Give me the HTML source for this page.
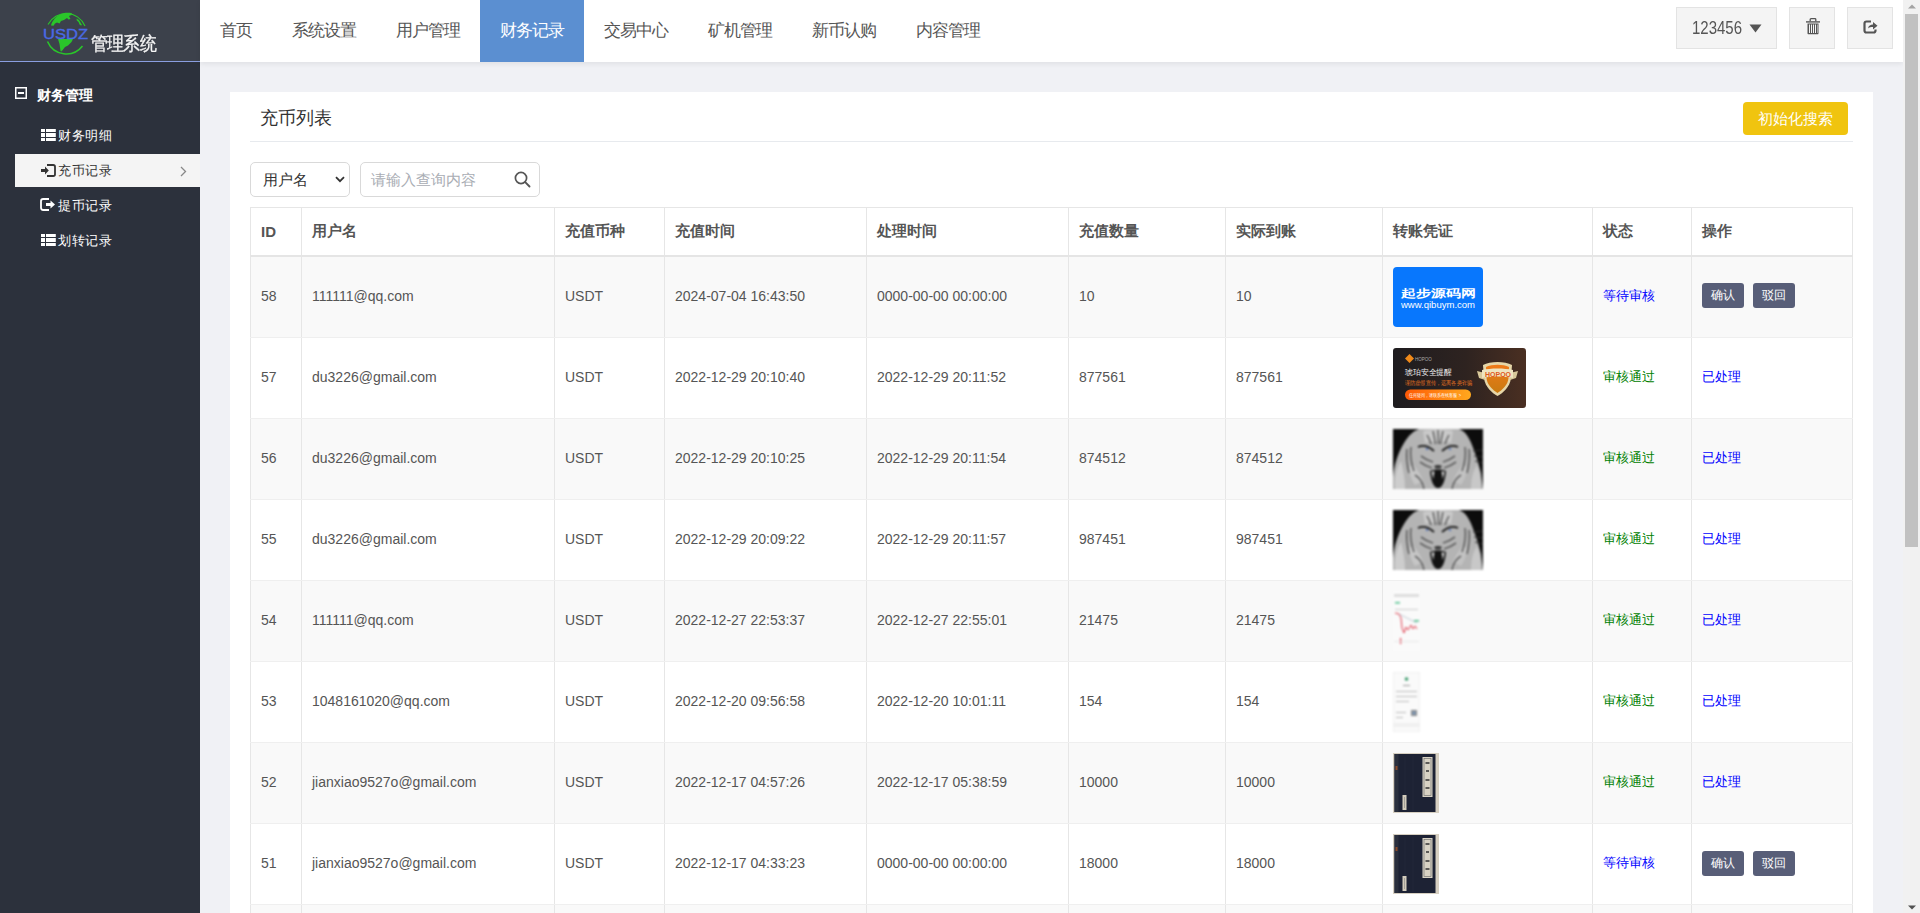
<!DOCTYPE html>
<html><head><meta charset="utf-8">
<style>
*{margin:0;padding:0;box-sizing:border-box}
html,body{width:1920px;height:913px;overflow:hidden}
body{font-family:"Liberation Sans",sans-serif;background:#f0f1f5;position:relative;color:#555}
#side{position:absolute;left:0;top:0;width:200px;height:913px;background:#2c313c}
#logo{position:absolute;left:0;top:0;width:200px;height:62px;background:#3c414b;border-bottom:1px solid #8a9ee0}
#logo .t{position:absolute;left:91px;top:31px;font-size:17px;letter-spacing:-0.8px;color:#f2f2f2;line-height:24px;white-space:nowrap;transform:scaleY(1.12);transform-origin:0 0;-webkit-text-stroke:0.25px #fff}
#top{position:absolute;left:200px;top:0;width:1703px;height:62px;background:#fff;box-shadow:0 2px 5px rgba(0,0,20,.07)}
#nav a{position:absolute;top:0;height:62px;line-height:61px;font-size:17px;letter-spacing:-1px;color:#555;text-decoration:none;white-space:nowrap}
#nav a.on{background:#5b8fd1;color:#fff}
.tb{position:absolute;top:7px;height:42px;background:#f4f4f4;border:1px solid #e3e3e3}
#scroll{position:absolute;left:1903px;top:0;width:17px;height:913px;background:#f1f1f1}
#thumb{position:absolute;left:2px;top:14px;width:13px;height:533px;background:#c1c1c1}
#card{position:absolute;left:230px;top:92px;width:1643px;height:900px;background:#fff}
.side-h{position:absolute;left:37px;top:85px;font-size:14px;font-weight:bold;color:#fff;line-height:20px;white-space:nowrap}
.mi{position:absolute;left:0;width:200px;height:34px;line-height:34px;font-size:13px;letter-spacing:0.5px;color:#fff;white-space:nowrap}
.mi span{position:absolute;left:58px;top:1px}
.mi.on{left:15px;width:185px;background:#f4f4f4;color:#333;top:154px!important;height:33px;line-height:33px}
.mi.on .ic{margin-top:0}
.mi.on span{top:0}
.mi.on span{left:43px}
.ic{position:absolute}
.uname{position:absolute;left:15px;top:0;line-height:40px;font-size:15px;color:#555;transform:scaleY(1.18);transform-origin:0 55%}
table{position:absolute;left:250px;top:207px;border-collapse:collapse;table-layout:fixed;width:1603px;font-size:14px;color:#555}
td,th{border:1px solid #e6e6e6;padding:0 10px;text-align:left;vertical-align:middle;white-space:nowrap}
th{height:48px;font-size:15px;font-weight:bold;color:#555;border-bottom:2px solid #e5e5e5}
td{border-top-color:#efefef;border-bottom-color:#efefef}
tr.r1 td{height:82px}
td{height:81px;padding-bottom:2px}
tr.odd td{background:#f9f9f9}
.pend{color:#0000ff;font-size:13px}
.ok{color:#008000;font-size:13px}
.done{color:#0000ff;font-size:13px}
.btn{display:inline-block;width:42px;height:25px;line-height:25px;text-align:center;background:#585e78;color:#fff;font-size:12px;border-radius:3px;margin-right:9px}
.ctitle{position:absolute;left:30px;top:14px;font-size:18px;color:#333;line-height:24px}
.cline{position:absolute;left:20px;top:49px;width:1603px;height:1px;background:#e7eaee}
.ybtn{position:absolute;left:1513px;top:10px;width:105px;height:33px;line-height:33px;text-align:center;background:#f0c40f;color:#fff;font-size:15px;border-radius:4px}
.sel{position:absolute;left:20px;top:70px;width:100px;height:35px;border:1px solid #d9d9d9;border-radius:5px;font-size:15px;color:#333;line-height:33px;padding-left:12px}
.chev{position:absolute;left:84px;top:13px}
.inp{position:absolute;left:130px;top:70px;width:180px;height:35px;border:1px solid #d9d9d9;border-radius:5px;font-size:15px;color:#a9adb4;line-height:33px;padding-left:10px}
.mag{position:absolute;left:153px;top:8px}
.im{display:inline-block;vertical-align:middle;position:relative;top:1px}
.blur{filter:blur(0.8px)}
</style></head><body>
<svg width="0" height="0" style="position:absolute">
<defs>
<linearGradient id="g2bg" x1="0" y1="0" x2="1" y2="0"><stop offset="0" stop-color="#1e1c1f"/><stop offset="0.55" stop-color="#2e2320"/><stop offset="1" stop-color="#4a2f22"/></linearGradient>
<linearGradient id="g2pill" x1="0" y1="0" x2="1" y2="0"><stop offset="0" stop-color="#ff5a05"/><stop offset="1" stop-color="#ffa81e"/></linearGradient>
<linearGradient id="g2sh" x1="0" y1="0" x2="0" y2="1"><stop offset="0" stop-color="#f07a1a"/><stop offset="1" stop-color="#c87a10"/></linearGradient>
<filter id="tblur" x="-5%" y="-5%" width="110%" height="110%"><feGaussianBlur stdDeviation="0.7"/></filter>
<radialGradient id="tface" cx="0.5" cy="0.55" r="0.55"><stop offset="0" stop-color="#b8b8b8"/><stop offset="0.7" stop-color="#a8a8a8"/><stop offset="1" stop-color="#8a8a8a"/></radialGradient>
<symbol id="tiger" viewBox="0 0 90 60">
  <rect width="90" height="60" fill="#0c0c0c"/>
  <path d="M0 48 C1 36 5 24 11 14 C15 7 20 2 26 0 H66 C72 2 76 8 79 16 C83 26 86 36 88 44 L90 60 H0Z" fill="#b4b4b4"/>
  <path d="M2 60 C1 50 3 40 8 32 C10 40 12 50 12 60Z" fill="#cdcdcd"/>
  <path d="M78 60 C78 50 80 42 84 36 C87 44 88 52 88 60Z" fill="#c8c8c8"/>
  <path d="M30 2 C36 0 54 0 60 2 L58 14 C52 12 38 12 32 14Z" fill="#c9c9c9"/>
  <path d="M20 36 C24 40 28 46 30 52 L22 56 C18 50 16 44 16 38Z" fill="#c6c6c6"/>
  <path d="M70 36 C66 40 62 46 60 52 L68 56 C72 50 74 44 74 38Z" fill="#c2c2c2"/>
  <g fill="none" stroke="#2e2e2e" stroke-width="1.1" opacity="0.9">
    <path d="M45 1 L45.5 15"/><path d="M40 2 C41 7 42 11 42.5 15"/><path d="M50 2 C49 7 48 11 47.5 15"/>
    <path d="M34 6 C36 9 37 12 38 15"/><path d="M56 6 C54 9 53 12 52 15"/>
    <path d="M14 20 C13 28 14 36 16 44"/><path d="M18 18 C17 26 18 34 21 42"/><path d="M76 20 C77 28 76 36 74 44"/><path d="M72 18 C73 26 72 34 69 42"/>
    <path d="M28 27 C32 30 36 32 40 33"/><path d="M62 27 C58 30 54 32 50 33"/>
    <path d="M27 33 C31 36 35 38 39 39"/><path d="M63 33 C59 36 55 38 51 39"/>
    <path d="M22 46 C27 49 30 54 31 60"/><path d="M68 46 C63 49 60 54 59 60"/>
    <path d="M80 22 L90 21"/><path d="M81 27 L90 28"/><path d="M82 32 L90 34"/>
  </g>
  <path d="M25 18 C30 15.5 36 17.5 41 22 M49 22 C54 17.5 60 15.5 65 18" stroke="#151515" stroke-width="1.8" fill="none"/>
  <path d="M37 42 C38 53 41 59 45 59 C49 59 52 53 53 42 C49 40 41 40 37 42Z" fill="#121212"/>
  <path d="M41 37 C43 35.5 47 35.5 49 37 L47.5 39.5 L42.5 39.5Z" fill="#3a3a3a"/>
  <path d="M38.5 42.5 L40.2 50 L41.5 42.5Z M51.5 42.5 L49.8 50 L48.5 42.5Z" fill="#dcdcdc"/>
  <circle cx="34" cy="20" r="1.1" fill="#4a6fbe"/><circle cx="57" cy="20" r="1.1" fill="#4a6fbe"/>
</symbol>
<symbol id="book" viewBox="0 0 46 60">
  <rect width="46" height="60" fill="#d6cfc1"/>
  <rect x="1.5" y="1" width="41" height="58" fill="#1d2234"/>
  <rect x="1.5" y="1" width="4" height="58" fill="#2a2f3d"/>
  <rect x="2.5" y="13" width="2" height="4" fill="#8a4a2a"/>
  <path d="M12 4 V58 M20 3 V58" stroke="#262b3c" stroke-width="0.6"/>
  <rect x="29.5" y="4" width="10" height="40" fill="#d8d2c4"/>
  <rect x="31" y="5.5" width="7" height="37" fill="none" stroke="#666" stroke-width="0.6"/>
  <path d="M32.5 10h4M33 18h3M32.5 27h4M32.5 35h4" stroke="#333" stroke-width="1.5"/>
  <rect x="9.5" y="42" width="4" height="15" fill="#d3ccbc"/>
  <path d="M11.5 44v11" stroke="#777" stroke-width="0.5"/>
</symbol>
<symbol id="phone1" viewBox="0 0 27 60">
  <rect width="27" height="60" fill="#fafafa"/>
  <rect x="1" y="3" width="25" height="3" fill="#ddd"/>
  <rect x="2" y="11" width="5" height="1.5" fill="#4cc08a"/>
  <rect x="2" y="18" width="23" height="1" fill="#ccc"/>
  <path d="M2 22 L6 23 L8 27 L9 37 L11 42 L13 36 L15 39 L18 34 L20 38 L22 35 L24 38" stroke="#e04050" stroke-width="1" fill="none"/>
  <path d="M6 23 L24 32" stroke="#9ab" stroke-width="0.6" fill="none"/>
  <rect x="21" y="29" width="5" height="1.5" fill="#4cc08a"/>
  <rect x="7" y="47" width="1.2" height="6" fill="#e04050"/>
  <rect x="1" y="50" width="25" height="1" fill="#e8e8e8"/>
</symbol>
<symbol id="phone2" viewBox="0 0 27 60">
  <rect width="27" height="60" fill="#fafafa"/>
  <rect x="0" y="0" width="27" height="60" fill="none" stroke="#eee" stroke-width="1.5"/>
  <circle cx="13.5" cy="7" r="1.8" fill="#3a9a6a"/>
  <rect x="10" y="13" width="7" height="1" fill="#999"/>
  <rect x="3" y="19" width="21" height="0.8" fill="#aaa"/>
  <rect x="3" y="24" width="21" height="0.8" fill="#aaa"/>
  <rect x="3" y="29" width="13" height="0.8" fill="#aaa"/>
  <rect x="3" y="40" width="10" height="0.8" fill="#aaa"/>
  <rect x="3" y="45" width="7" height="0.8" fill="#aaa"/>
  <rect x="18" y="38" width="6" height="6" fill="#8a8a8a"/>
  <rect x="19.5" y="39.5" width="3" height="3" fill="#7a9ac0"/>
  <rect x="0" y="51" width="27" height="4" fill="#f0f0f0"/>
</symbol>
</defs></svg>
<div id="side">
  <div id="logo">
    <svg style="position:absolute;left:40px;top:10px" width="52" height="48" viewBox="0 0 52 48">
      <path d="M8 14.5 A20.5 20.5 0 0 1 45 16" fill="none" stroke="#2ac52a" stroke-width="1.1"/>
      <path d="M7.5 31.5 A20.5 20.5 0 0 0 42.5 36" fill="none" stroke="#2ac52a" stroke-width="1.6"/>
      <path d="M11 15.5 C12 11 16 6 21 4 C24 2.8 28 2.5 32 3.2 L31.5 5 L29 6 L30.5 9 L28.5 9.5 L27 8 L24 10 L21 11 L19.5 13.5 L17 12.5 L15 13.5 L13.5 15.8 Z" fill="#2ac52a"/>
      <path d="M36.5 8.5 L39 10 L42 15 L41 15.5 L39.5 14.5 L38.5 12 L36.8 10.5 Z" fill="#2ac52a"/>
      <path d="M18 29 L33 29 L31.5 32 L28 35.5 L25 37 L21.5 41.5 L20.5 41 L19.5 34 Z" fill="#2ac52a"/>
      <text x="3" y="29" font-family="Liberation Sans" font-size="14.8" fill="#4a6ae6" stroke="#4a6ae6" stroke-width="0.35" textLength="45" lengthAdjust="spacingAndGlyphs">USDZ</text>
    </svg>
    <div class="t">管理系统</div>
  </div>
  <svg style="position:absolute;left:15px;top:87px" width="12" height="12" viewBox="0 0 12 12"><rect x="0.75" y="0.75" width="10.5" height="10.5" fill="none" stroke="#fff" stroke-width="1.5"/><rect x="3" y="5" width="6" height="2" fill="#fff"/></svg>
  <div class="side-h">财务管理</div>
  <div class="mi" style="top:118px"><svg class="ic" style="left:40.5px;top:11px" width="15" height="13" viewBox="0 0 15 13"><path d="M0 0h4v3H0zM5 0h9.8v3H5zM0 4h4v4H0zM5 4h9.8v4H5zM0 9h4v3H0zM5 9h9.8v3H5z" fill="#fff"/></svg><span>财务明细</span></div>
  <div class="mi on" style="top:153px"><svg class="ic" style="left:26px;top:10px" width="15" height="13" viewBox="0 0 15 13"><path d="M0 5h4V2.5L7.8 6.5 4 10.5V8H0z" fill="#333"/><path d="M6 1h6.2c1 0 1.8.8 1.8 1.8v7.4c0 1-.8 1.8-1.8 1.8H6" fill="none" stroke="#333" stroke-width="1.8"/></svg><span>充币记录</span><svg class="ic" style="left:165px;top:12px" width="7" height="11" viewBox="0 0 7 11"><path d="M1 1l4.5 4.5L1 10" fill="none" stroke="#888" stroke-width="1.3"/></svg></div>
  <div class="mi" style="top:188px"><svg class="ic" style="left:40px;top:10px" width="16" height="13" viewBox="0 0 16 13"><path d="M9 1H3.2C2 1 1 2 1 3.2v6.6C1 11 2 12 3.2 12H9" fill="none" stroke="#fff" stroke-width="1.8"/><path d="M6 5h4.5V2.5L15 6.5 10.5 10.5V8H6z" fill="#fff"/></svg><span>提币记录</span></div>
  <div class="mi" style="top:223px"><svg class="ic" style="left:40.5px;top:11px" width="15" height="13" viewBox="0 0 15 13"><path d="M0 0h4v3H0zM5 0h9.8v3H5zM0 4h4v4H0zM5 4h9.8v4H5zM0 9h4v3H0zM5 9h9.8v3H5z" fill="#fff"/></svg><span>划转记录</span></div>
</div>
<div id="top">
  <div id="nav">
    <a style="left:0;padding:0 20px">首页</a>
    <a style="left:72px;padding:0 20px">系统设置</a>
    <a style="left:176px;padding:0 20px">用户管理</a>
    <a class="on" style="left:280px;padding:0 20px;width:104px">财务记录</a>
    <a style="left:384px;padding:0 20px">交易中心</a>
    <a style="left:488px;padding:0 20px">矿机管理</a>
    <a style="left:592px;padding:0 20px">新币认购</a>
    <a style="left:696px;padding:0 20px">内容管理</a>
  </div>
  <div class="tb" style="left:1476px;width:101px"><span class="uname">123456</span><svg class="ic" style="left:72px;top:16px" width="13" height="9" viewBox="0 0 13 9"><path d="M0.5 0.5h12L6.5 8.5z" fill="#555"/></svg></div>
  <div class="tb" style="left:1589px;width:46px"><svg class="ic" style="left:16px;top:10px" width="14" height="17" viewBox="0 0 14 17"><path d="M0 3.2h14v1.4H0z" fill="#555"/><path d="M4.2 3.2V1.5c0-.5.3-.8.8-.8h4c.5 0 .8.3.8.8v1.7" fill="none" stroke="#555" stroke-width="1.3"/><path d="M1.5 5.5h11v9.7c0 .6-.4 1-1 1h-9c-.6 0-1-.4-1-1z" fill="#555"/><path d="M3 6.5h1v8.5H3zM5 6.5h1v8.5H5zM7 6.5h1v8.5H7zM9 6.5h1v8.5H9zM11 6.5h.5v8.5H11z" fill="#f4f4f4"/></svg></div>
  <div class="tb" style="left:1647px;width:46px"><svg class="ic" style="left:15px;top:12px" width="15" height="14" viewBox="0 0 15 14"><path d="M8 1.5H3.5C2.4 1.5 1.5 2.4 1.5 3.5v7c0 1.1.9 2 2 2h7c1.1 0 2-.9 2-2V9.5" fill="none" stroke="#555" stroke-width="2.2"/><path d="M5 8.5C5.5 5.5 7.5 4.5 10 4.5V2L14.5 5.8 10 9.5V7C7.8 7 6 7.3 5 8.5z" fill="#555"/></svg></div>
</div>
<div id="scroll"><div id="thumb"></div><svg class="ic" style="left:5px;top:4px" width="8" height="5" viewBox="0 0 8 5"><path d="M0 4.5L4 0.5 8 4.5z" fill="#a3a3a3"/></svg><svg class="ic" style="left:5px;top:905px" width="8" height="5" viewBox="0 0 8 5"><path d="M0 0.5h8L4 4.5z" fill="#505050"/></svg></div>
<div id="card">
  <div class="ctitle">充币列表</div>
  <div class="cline"></div>
  <div class="ybtn">初始化搜索</div>
  <div class="sel">用户名<svg class="chev" width="10" height="7" viewBox="0 0 10 7"><path d="M1 1.2 L5 5.2 L9 1.2" fill="none" stroke="#333" stroke-width="1.8"/></svg></div>
  <div class="inp">请输入查询内容<svg class="mag" width="17" height="17" viewBox="0 0 17 17"><circle cx="7" cy="7" r="5.6" fill="none" stroke="#555" stroke-width="1.7"/><path d="M11.2 11.2 L15.5 15.5" stroke="#555" stroke-width="1.9" stroke-linecap="round"/></svg></div>
</div>
<table>
<colgroup><col style="width:51px"><col style="width:253px"><col style="width:110px"><col style="width:202px"><col style="width:202px"><col style="width:157px"><col style="width:157px"><col style="width:210px"><col style="width:99px"><col style="width:161px"></colgroup>
<tr><th>ID</th><th>用户名</th><th>充值币种</th><th>充值时间</th><th>处理时间</th><th>充值数量</th><th>实际到账</th><th>转账凭证</th><th>状态</th><th>操作</th></tr>
<tr class="odd r1"><td>58</td><td>111111@qq.com</td><td>USDT</td><td>2024-07-04 16:43:50</td><td>0000-00-00 00:00:00</td><td>10</td><td>10</td><td><svg class="im" width="90" height="60" viewBox="0 0 90 60"><rect width="90" height="60" rx="4" fill="#0877fd"/><text x="8" y="30" font-family="Liberation Sans" font-weight="bold" font-size="11" fill="#fff" textLength="75" lengthAdjust="spacingAndGlyphs">起步源码网</text><text x="8" y="40.5" font-family="Liberation Sans" font-size="9.5" fill="#fff" textLength="74" lengthAdjust="spacingAndGlyphs">www.qibuym.com</text></svg></td><td><span class="pend">等待审核</span></td><td><span class="btn">确认</span><span class="btn">驳回</span></td></tr>
<tr class=""><td>57</td><td>du3226@gmail.com</td><td>USDT</td><td>2022-12-29 20:10:40</td><td>2022-12-29 20:11:52</td><td>877561</td><td>877561</td><td><svg class="im" width="133" height="60" viewBox="0 0 133 60"><rect width="133" height="60" rx="3" fill="url(#g2bg)"/>
<path d="M16.5 6 L21 10.5 L16.5 15 L12 10.5Z" fill="#f08a1a"/><text x="22" y="13" font-family="Liberation Sans" font-size="4.5" fill="#aaa">HOPOO</text>
<text x="12" y="27" font-family="Liberation Sans" font-size="8" fill="#eee" textLength="47" lengthAdjust="spacingAndGlyphs">琥珀安全提醒</text>
<text x="12" y="37" font-family="Liberation Sans" font-size="5.5" fill="#e07020" textLength="67" lengthAdjust="spacingAndGlyphs">谨防虚假宣传，远离各类诈骗</text>
<rect x="12" y="41.5" width="66" height="10.5" rx="5.25" fill="url(#g2pill)"/>
<text x="16" y="48.8" font-family="Liberation Sans" font-size="5" fill="#fff" textLength="52" lengthAdjust="spacingAndGlyphs">任何疑问，请联系在线客服 &gt;</text>
<path d="M90 17 C97 13 112 13 119 17 L118 30 C117 39 110 45 104.5 48 C99 45 92 39 91 30Z" fill="#e6d6a8"/>
<path d="M93 19 C99 16 110 16 116 19 L115.5 30 C115 37 109 42 104.5 45 C100 42 94 37 93.5 30Z" fill="url(#g2sh)"/>
<path d="M84 23 L92 25 L92 32 L86 30Z M125 23 L117 25 L117 32 L123 30Z" fill="#d8c89a"/>
<path d="M89 22 C98 20 111 20 120 22 L120 30 C111 28 98 28 89 30Z" fill="#efe4c0"/>
<text x="92" y="28.5" font-family="Liberation Sans" font-weight="bold" font-size="7" fill="#e05a20" textLength="26" lengthAdjust="spacingAndGlyphs">HOPOO</text>
</svg></td><td><span class="ok">审核通过</span></td><td><span class="done">已处理</span></td></tr>
<tr class="odd"><td>56</td><td>du3226@gmail.com</td><td>USDT</td><td>2022-12-29 20:10:25</td><td>2022-12-29 20:11:54</td><td>874512</td><td>874512</td><td><svg class="im blur" width="90" height="60"><use href="#tiger"/></svg></td><td><span class="ok">审核通过</span></td><td><span class="done">已处理</span></td></tr>
<tr class=""><td>55</td><td>du3226@gmail.com</td><td>USDT</td><td>2022-12-29 20:09:22</td><td>2022-12-29 20:11:57</td><td>987451</td><td>987451</td><td><svg class="im blur" width="90" height="60"><use href="#tiger"/></svg></td><td><span class="ok">审核通过</span></td><td><span class="done">已处理</span></td></tr>
<tr class="odd"><td>54</td><td>111111@qq.com</td><td>USDT</td><td>2022-12-27 22:53:37</td><td>2022-12-27 22:55:01</td><td>21475</td><td>21475</td><td><svg class="im blur" width="27" height="60"><use href="#phone1"/></svg></td><td><span class="ok">审核通过</span></td><td><span class="done">已处理</span></td></tr>
<tr class=""><td>53</td><td>1048161020@qq.com</td><td>USDT</td><td>2022-12-20 09:56:58</td><td>2022-12-20 10:01:11</td><td>154</td><td>154</td><td><svg class="im blur" width="27" height="60"><use href="#phone2"/></svg></td><td><span class="ok">审核通过</span></td><td><span class="done">已处理</span></td></tr>
<tr class="odd"><td>52</td><td>jianxiao9527o@gmail.com</td><td>USDT</td><td>2022-12-17 04:57:26</td><td>2022-12-17 05:38:59</td><td>10000</td><td>10000</td><td><svg class="im" width="46" height="60"><use href="#book"/></svg></td><td><span class="ok">审核通过</span></td><td><span class="done">已处理</span></td></tr>
<tr class=""><td>51</td><td>jianxiao9527o@gmail.com</td><td>USDT</td><td>2022-12-17 04:33:23</td><td>0000-00-00 00:00:00</td><td>18000</td><td>18000</td><td><svg class="im" width="46" height="60"><use href="#book"/></svg></td><td><span class="pend">等待审核</span></td><td><span class="btn">确认</span><span class="btn">驳回</span></td></tr>
<tr class="odd"><td></td><td></td><td></td><td></td><td></td><td></td><td></td><td></td><td></td><td></td></tr>
</table>
</body></html>
